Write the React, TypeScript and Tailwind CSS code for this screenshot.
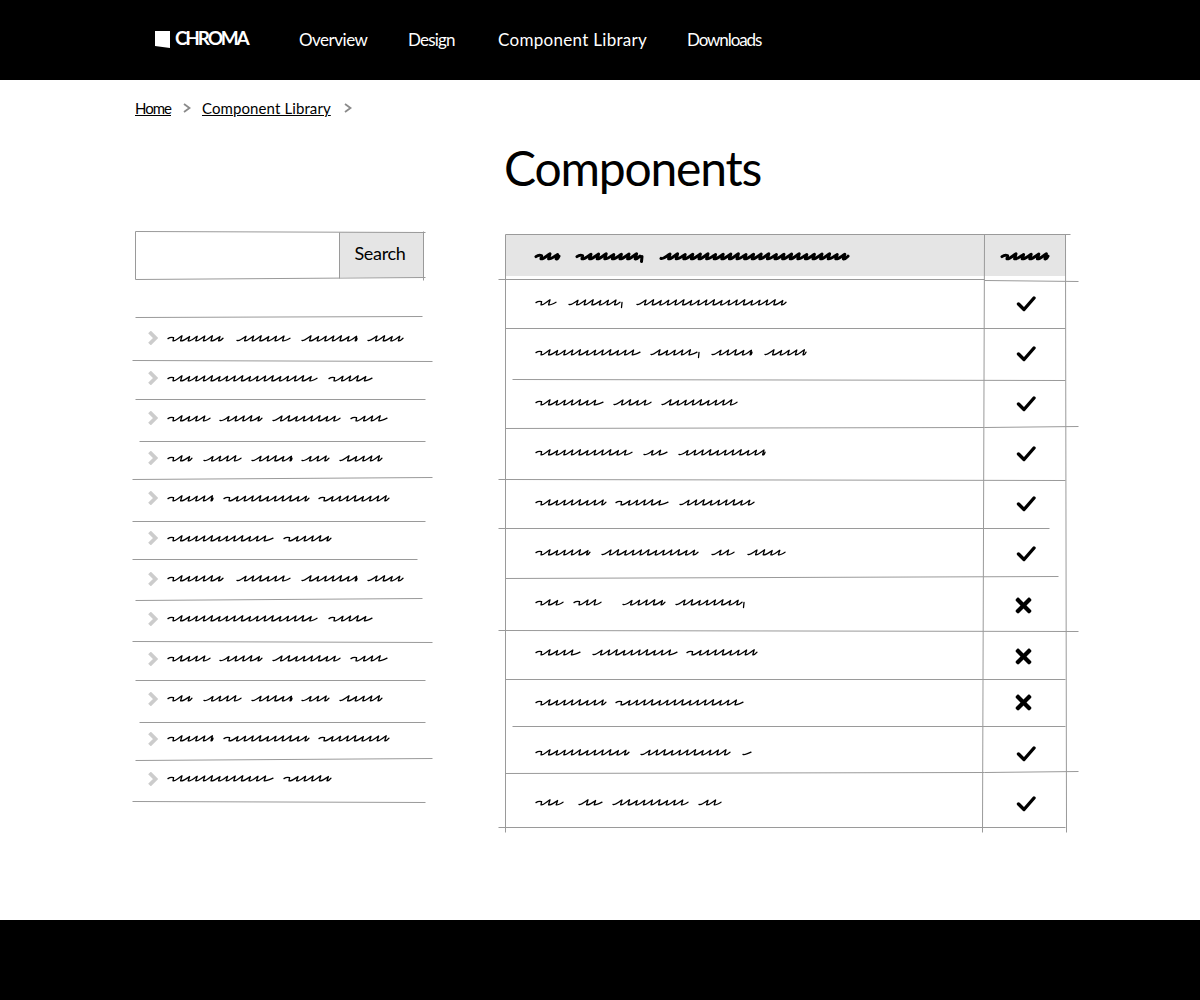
import * as React from 'react';
import { FaTimes } from 'react-icons/fa';

type Line = [number, number, number, number];

// sketchy rules, in page coordinates
const sideLines: Line[] = [
  [135, 317, 422, 316], [132, 360, 432, 361], [135, 399, 425, 399], [139, 441, 425, 441],
  [132, 479, 432, 477], [132, 521, 425, 521], [132, 559, 417, 559], [135, 600, 422, 598],
  [132, 641, 432, 642], [135, 680, 425, 680], [139, 722, 425, 722], [135, 760, 432, 758],
  [132, 801, 425, 802],
];
const tableLines: Line[] = [
  [505, 234, 1070, 234], [498, 279, 984, 279], [984, 280, 1078, 281], [505, 328, 1065, 328],
  [512, 379, 1065, 380], [505, 428, 984, 427], [984, 427, 1078, 426], [498, 479, 1065, 480],
  [498, 528, 1049, 528], [505, 578, 1058, 576], [498, 630, 1078, 631], [505, 679, 1065, 679],
  [512, 726, 1065, 726], [505, 773, 984, 772], [984, 772, 1078, 771], [498, 827, 1065, 827],
  [505, 234, 505, 832], [984, 234, 982, 832], [1065, 234, 1066, 832],
];
const searchLines: Line[] = [
  [135, 231, 425, 232], [135, 279, 425, 277], [135, 231, 135, 279], [339, 232, 339, 278], [423, 231, 423, 280],
];

// word spans of the scribbled text; a third value marks a comma tail
const sideRows: number[][][] = [
  [[0, 55], [69, 122], [134, 189], [200, 235]],
  [[0, 149], [161, 204]],
  [[0, 42], [52, 94], [105, 172], [183, 219]],
  [[0, 24], [36, 73], [84, 124], [134, 161], [172, 214]],
  [[0, 45], [56, 141], [151, 221]],
  [[0, 105], [116, 163]],
];

const tableRows: { words: number[][]; mark: 'check' | 'x' }[] = [
  { words: [[0, 20], [33, 84, 1], [101, 250]], mark: 'check' },
  { words: [[0, 104], [115, 161, 1], [176, 216], [229, 270]], mark: 'check' },
  { words: [[0, 67], [78, 115], [126, 201]], mark: 'check' },
  { words: [[0, 96], [108, 131], [143, 229]], mark: 'check' },
  { words: [[0, 70], [80, 132], [144, 218]], mark: 'check' },
  { words: [[0, 54], [66, 162], [176, 198], [212, 249]], mark: 'check' },
  { words: [[0, 27], [38, 65], [87, 129], [140, 206, 1]], mark: 'x' },
  { words: [[0, 44], [57, 141], [151, 221]], mark: 'x' },
  { words: [[0, 70], [80, 207]], mark: 'x' },
  { words: [[0, 93], [105, 194], [207, 215]], mark: 'check' },
  { words: [[0, 27], [43, 66], [77, 152], [163, 185]], mark: 'check' },
];

// slanted "uuu" scribble: curve up to the right, short stroke back down to the left
function squigglePath(x0: number, x1: number, seed: number, comma?: number) {
  const p = 7.6;
  const hooked = seed % 3 === 0;
  let x = x0 + (hooked ? 5 : 0);
  let d = hooked ? `M${x0} 6.6 Q${x0 + 2.5} 4.8 ${x0 + 5.6} 5.6 L${x} 8.8` : `M${x0} 8.4`;
  let i = seed;
  while (x + p + 1.5 < x1) {
    const top = 3.8 + ((i * 7) % 4) * 0.25;
    const bot = 8.8 + ((i * 3) % 3) * 0.2;
    d += ` C${x + 2} ${bot + 0.8} ${x + 5} ${top + 2.5} ${x + p + 1.4} ${top} L${x + p} ${bot}`;
    x += p;
    i++;
  }
  d += ` Q${x + 1.5} ${9.4} ${x1} 6.2`;
  if (comma) d += ` M${x1 + 2} 6.5 L${x1 + 1.5} 11.5`;
  return d;
}

function Squiggle({ words, bold = false }: { words: number[][]; bold?: boolean }) {
  const width = words[words.length - 1][1] + 2;
  return (
    <svg width={width} height="12" className="block overflow-visible" fill="none" stroke="#000" strokeWidth={bold ? 3 : 1.3} strokeLinejoin="round" strokeLinecap="round">
      {words.map((w, i) => (
        <path key={i} d={squigglePath(w[0], w[1], i + w[0], w[2])} />
      ))}
    </svg>
  );
}

// hand drawn lines laid over a block, origin is the block's page position
function Sketch({ lines, ox, oy }: { lines: Line[]; ox: number; oy: number }) {
  return (
    <svg className="pointer-events-none absolute left-0 top-0 h-px w-px overflow-visible" fill="none" stroke="#9a9a9a" strokeWidth="1">
      <g transform={`translate(${0.5 - ox} ${0.5 - oy})`}>
        {lines.map((l, i) => (
          <line key={i} x1={l[0]} y1={l[1]} x2={l[2]} y2={l[3]} />
        ))}
      </g>
    </svg>
  );
}

function Crumb() {
  return (
    <svg width="8" height="10" viewBox="0 0 8 10" fill="none" stroke="#8a8a8a" strokeWidth="1.8">
      <path d="M1 1 L6.5 5 L1 9" />
    </svg>
  );
}

function Check() {
  return (
    <svg width="20" height="18" viewBox="0 0 20 18" className="mt-[4px]" fill="none" stroke="#000" strokeWidth="3.4" strokeLinecap="round" strokeLinejoin="round">
      <path d="M2.5 9 L8 14.5 L18 3" />
    </svg>
  );
}

const hand = "font-['Lato','Open_Sans',sans-serif]";

export default function App() {
  return (
    <div className={`flex min-h-screen flex-col bg-white text-black ${hand}`}>
      <header className="flex h-20 items-center bg-black pl-[155px] text-white">
        <svg width="15" height="17" viewBox="0 0 15 17" className="mt-[-2px]">
          <path d="M0 0 L15 0 L15 17 L0 15 Z" fill="#fff" />
        </svg>
        <span className="ml-[5px] mt-[-3px] w-[124px] text-[19px] font-bold tracking-[-2.2px]">CHROMA</span>
        <nav className="flex text-[17px]">
          <a className="w-[109px] tracking-[-0.5px]">Overview</a>
          <a className="w-[90px] tracking-[-0.8px]">Design</a>
          <a className="w-[189px] tracking-[0.3px]">Component Library</a>
          <a className="tracking-[-1.1px]">Downloads</a>
        </nav>
      </header>

      <div className="flex h-14 items-center pl-[135px] text-[15px]">
        <a className="tracking-[-1px] underline">Home</a>
        <span className="ml-[12px] mr-[11px]"><Crumb /></span>
        <a className="tracking-[0.1px] underline">Component Library</a>
        <span className="ml-[13px]"><Crumb /></span>
      </div>

      <div className="flex h-[64px] items-center pl-[504px] text-[48px] leading-none">
        <h1 className="font-normal tracking-[-1.2px]">Components</h1>
      </div>

      <main className="mt-[31px] flex items-start pl-[135px]">
        <aside className="w-[290px]">
          <div className="relative flex h-[47px]">
            <Sketch lines={searchLines} ox={135} oy={231} />
            <input className="h-full w-[204px] bg-transparent outline-none" />
            <button className="mt-px h-[45px] w-[84px] bg-[#e5e5e5] pb-[4px] pr-[2px] text-[18px] leading-none tracking-[-0.3px]">Search</button>
          </div>
          <ul className="relative mt-[40px]">
            <Sketch lines={sideLines} ox={135} oy={318} />
            {[...sideRows, ...sideRows].map((words, i) => (
              <li key={i} className="flex h-10 items-center pl-[13px]">
                <svg width="10" height="14" viewBox="0 0 10 14" className={i >= 6 ? 'mt-[2px]' : ''} fill="none" stroke="#cccccc" strokeWidth="3.8">
                  <path d="M1.5 1 L7.5 7 L1.5 13" />
                </svg>
                <span className="ml-[10px]"><Squiggle words={words} /></span>
              </li>
            ))}
          </ul>
        </aside>

        <section className="relative ml-[80px] mt-px w-[560px]">
          <Sketch lines={tableLines} ox={505} oy={232} />
          <div className="ml-px mt-[3px] mb-px flex h-[41px] w-[560px] items-center bg-[#e5e5e5]">
            <div className="w-[478px] pl-[30px]">
              <Squiggle words={[[0, 23], [41, 104, 1], [125, 312]]} bold />
            </div>
            <div className="pl-[18px]">
              <Squiggle words={[[0, 46]]} bold />
            </div>
          </div>
          {tableRows.map((r, i) => (
            <div key={i} className="flex h-[50px] items-center">
              <div className="w-[479px] pl-[31px]">
                <Squiggle words={r.words} />
              </div>
              <div className="flex w-[81px] items-center justify-center pl-[2px]">
                {r.mark === 'check' ? <Check /> : (
                  <FaTimes size={23} className={i === 6 ? 'mr-[5px] mt-[6px]' : i === 7 ? 'mr-[5px] mt-[8px]' : 'mr-[5px] mt-px'} />
                )}
              </div>
            </div>
          ))}
        </section>
      </main>

      <footer className="mt-auto h-20 bg-black" />
    </div>
  );
}
